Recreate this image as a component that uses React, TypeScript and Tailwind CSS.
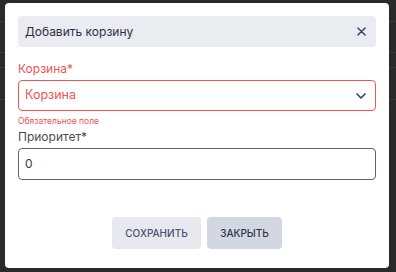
export default function App() {
  return (
    <div
      className="relative w-[396px] h-[272px] overflow-hidden bg-[#2a2a2a] pt-[3px] pl-[5px]"
      style={{ fontFamily: 'Inter, "Noto Sans", sans-serif' }}
    >
      {/* faint table lines behind the dialog */}
      <div className="absolute inset-0 flex flex-col">
        <div className="h-[22px] border-b border-[#3a3a3a]" />
        <div className="h-[31px] border-b border-[#3a3a3a]" />
        <div className="h-[15px] border-b border-[#3a3a3a]" />
        <div className="h-[32px] border-b border-[#3a3a3a]" />
      </div>

      <div className="relative w-[384px] h-[265px] bg-white rounded-[4px] p-[13px] flex flex-col">
        <div className="h-[31px] bg-[#ebebf2] rounded-[4px] flex items-center justify-between pl-[7px] pr-[10px]">
          <span className="text-[12px] text-[#2b2f3f]">Добавить корзину</span>
          <svg width="9" height="9" viewBox="0 0 10 10" className="text-[#3d4463]">
            <path d="M1 1L9 9M9 1L1 9" stroke="currentColor" strokeWidth="1.6" strokeLinecap="round" />
          </svg>
        </div>

        <label className="mt-[15px] text-[12px] leading-[14px] text-[#f05454]">Корзина*</label>
        <div className="mt-[4px] h-[31px] border border-[#f05454] rounded-[4px] flex items-center justify-between pl-[6px] pr-[8px]">
          <span className="text-[12.5px] text-[#f05454]">Корзина</span>
          <svg width="12" height="8" viewBox="0 0 12 8" className="text-[#3d4463]">
            <path d="M2 2L6 6L10 2" fill="none" stroke="currentColor" strokeWidth="1.7" strokeLinecap="round" strokeLinejoin="round" />
          </svg>
        </div>
        <span className="mt-[5px] text-[8.5px] leading-[10px] text-[#f05454]">Обязательное поле</span>

        <label className="mt-[4px] text-[12px] leading-[14px] text-[#4a4a55]">Приоритет*</label>
        <div className="mt-[4px] h-[32px] border border-[#5a6285] rounded-[4px] flex items-center pl-[6px]">
          <span className="text-[12px] text-[#3a3a44]">0</span>
        </div>

        <div className="mt-[37px] flex justify-center gap-[6px]">
          <button className="w-[89px] h-[32px] rounded-[4px] bg-[#e8e9ef] text-[10px] font-medium text-[#4b5170] uppercase">
            Сохранить
          </button>
          <button className="w-[75px] h-[32px] rounded-[4px] bg-[#d3d7e2] text-[10px] font-medium text-[#2e3448] uppercase">
            Закрыть
          </button>
        </div>
      </div>
    </div>
  );
}
